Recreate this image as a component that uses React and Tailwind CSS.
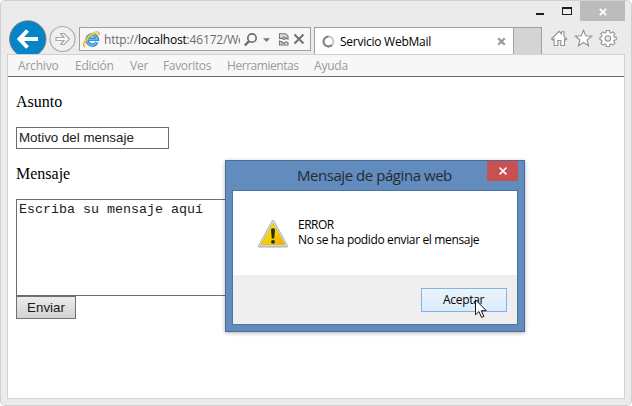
const MENU = [
  { label: "Archivo", cls: "w-[57px] tracking-[-0.2px]" },
  { label: "Edición", cls: "w-[55px] tracking-[-0.25px]" },
  { label: "Ver", cls: "w-[33px] tracking-[-0.2px]" },
  { label: "Favoritos", cls: "w-[64px] tracking-[-0.35px]" },
  { label: "Herramientas", cls: "w-[87px] tracking-[-0.45px]" },
  { label: "Ayuda", cls: "w-[40px] tracking-[-0.2px]" },
];

function WindowControls() {
  return (
    <div className="flex h-[20px] shrink-0 justify-end pr-[6px]">
      <svg className="mr-[7px] h-[20px] w-[38px]" viewBox="535 1 38 20" shapeRendering="crispEdges">
        <path d="M536 13h8v2h-8z" fill="#1c1c1c" />
        <path d="M562 7h10v8h-10zM563 9v5h8V9z" fill="#1c1c1c" fillRule="evenodd" />
      </svg>
      <div className="flex w-[45px] justify-center bg-[#bcbcbc] pt-[7px]">
        <svg className="h-[8px] w-[8px]" viewBox="0 0 8 8">
          <path d="M.8.8l6.400 6.400M7.200.8L.8 7.200" stroke="#fff" strokeWidth="1.700" />
        </svg>
      </div>
    </div>
  );
}

function AddressBar() {
  return (
    <div className="flex h-[24px] w-[232px] shrink-0 items-center border border-[#a0a0a0] bg-[#f7f7f7]">
      <svg className="ml-[3px] h-[17px] w-[17px] shrink-0" viewBox="0 0 17 17">
        <path d="M13.900 11.200a5.200 5.200 0 1 1 .5-3H5.600" fill="none" stroke="#2779bd" strokeWidth="3.400" />
        <path d="M13.700 11a5.200 5.200 0 1 1 .5-2.500H5" fill="none" stroke="#62b5ea" strokeWidth="2" />
        <path d="M2 15.600C-.8 14.300 3 7 8.300 3.500 12 .8 16.500-.2 15.600 3.800" fill="none" stroke="#dfa51b" strokeWidth="2" />
        <path d="M2 15.300C0 14 3.500 7 8.500 3.500 12 1.200 15.800.2 15.500 3" fill="none" stroke="#ffd83d" strokeWidth="1.200" />
      </svg>
      <div className="mt-[1px] ml-[4px] w-[136px] shrink-0 overflow-hidden text-[12px] leading-[18px] tracking-[-0.18px] whitespace-nowrap text-[#6d6d6d]">
        http://<span className="text-black">localhost</span>:46172/We
      </div>
      <svg className="h-[22px] w-[68px] shrink-0" viewBox="240 28 68 22">
        <circle cx="252" cy="38" r="4.200" fill="none" stroke="#6e6e6e" strokeWidth="1.700" />
        <path d="M249 41.300l-4.200 4" stroke="#6e6e6e" strokeWidth="2.400" />
        <path d="M263 38.300h7l-3.500 3.800z" fill="#777" />
        <path d="M279.500 38.500v-4.800h6l2.500 2.500v3l-2-1-2 1.500-2.500-1.500zM279.500 41l2 .8 2.500 1.500 2-1.500 2 .8v2.400h-8.500z" fill="#ddd" stroke="#757575" strokeWidth="1.100" />
        <path d="M281 38h2l1-1.500 1 1.500h2M281 43.500l1.500-1 1.500 1.500" fill="none" stroke="#777" />
        <path d="M294.500 34.500l9 9M303.500 34.500l-9 9" stroke="#747474" strokeWidth="2.100" />
      </svg>
    </div>
  );
}

function Toolbar() {
  return (
    <div className="flex h-[27px] shrink-0 pl-[7px]">
      <svg className="-mt-[7px] h-[34px] w-[40px] shrink-0" viewBox="8 20 40 34">
        <circle cx="27.800" cy="39" r="18.200" fill="#0584c7" stroke="#7d7d7d" />
        <path d="M20 39h18M27.500 30.500L19.500 39l8 8.500" fill="none" stroke="#fff" strokeWidth="4" />
      </svg>
      <svg className="-mt-[2px] mr-[3px] ml-[1px] h-[28px] w-[27px] shrink-0" viewBox="49.500 25 27 28">
        <circle cx="63" cy="39" r="12.500" fill="#f0f0f0" stroke="#ababab" strokeWidth="1.200" />
        <path d="M56.500 37.500h8l-3.300-4h3.600l5.200 5.500-5.200 5.500h-3.600l3.300-4h-8z" fill="#fafafa" stroke="#a8a8a8" strokeWidth="1.200" />
      </svg>
      <AddressBar />
      <div className="ml-[3px] flex w-[199px] shrink-0 border-t border-l border-[#a0a0a0] bg-white">
        <svg className="mt-[7px] ml-[7px] h-[13px] w-[13px]" viewBox="0 0 13 13">
          <circle cx="6.500" cy="6.500" r="4.900" fill="none" stroke="#c6c6c6" strokeWidth="2" />
          <path d="M6.500 1.600a4.900 4.900 0 1 0 3.400 8.400" fill="none" stroke="#838383" strokeWidth="2" />
        </svg>
        <span className="mt-[5px] ml-[5px] w-[144px] text-[12px] leading-[18px] tracking-[-0.25px] whitespace-nowrap text-black">
          Servicio WebMail
        </span>
        <svg className="mt-[9px] ml-[13px] h-[9px] w-[9px]" viewBox="0 0 9 9">
          <path d="M1.200 1.200l6.600 6.600M7.800 1.200L1.200 7.800" stroke="#9b9b9b" strokeWidth="2.300" />
        </svg>
      </div>
      <div className="w-[29px] shrink-0 border-x border-t border-[#a0a0a0] bg-[#d4d4d4]" />
      <svg className="ml-[8px] h-[22px] w-[70px] shrink-0" viewBox="550 27 70 22" fill="#fff" stroke="#929292" strokeWidth="1.100">
        <path d="M551.500 39l7.500-7.700 2.500 2.500v-2h2.500v4.500l2.800 2.700-1.300 1-1-1v6.500h-3.700v-5h-3v5h-3.700V39l-1.300 1z" />
        <path d="M583.500 30.300l2.200 5.500 6 .4-4.600 3.800 1.500 5.800-5.100-3.300-5.100 3.300 1.500-5.800-4.600-3.800 6-.4z" />
        <path d="M606.300 30.500h3.200l.4 2.100 1.200.5 1.800-1.200 2 2-1.200 1.800.5 1.200 2.100.4v2.400l-2.100.4-.5 1.200 1.200 1.800-2 2-1.800-1.200-1.200.5-.4 2.100h-3.200l-.4-2.100-1.200-.5-1.800 1.200-2-2 1.200-1.800-.5-1.200-1.600-.4v-2.400l1.600-.4.5-1.200-1.200-1.800 2-2 1.800 1.200 1.200-.5z" />
        <circle cx="607.900" cy="38.500" r="2.700" fill="#ebebeb" />
      </svg>
    </div>
  );
}

function MessageForm() {
  return (
    <main className="flex flex-1 flex-col items-start bg-white pt-[16px] pl-[8px] font-['Liberation_Serif',serif] text-[16px] leading-[18px] text-black">
      <p>Asunto</p>
      <div className="mt-[16px] h-[22px] w-[153px] border border-[#6d6d6d] pl-[2px] font-['Liberation_Sans',sans-serif] text-[13.33px] leading-[20px] text-[#202020]">
        Motivo del mensaje
      </div>
      <p className="mt-[16px]">Mensaje</p>
      <div className="mt-[16px] h-[97px] w-[300px] border border-[#6d6d6d] pt-[2px] pl-[2px] font-['Liberation_Mono',monospace] text-[13.33px] leading-[16px] text-[#202020]">
        Escriba su mensaje aquí
      </div>
      <div className="flex h-[23px] w-[60px] items-center justify-center border border-[#707070] bg-linear-to-b from-[#ececec] to-[#d2d2d2] font-['Liberation_Sans',sans-serif] text-[13.33px] text-[#1a1a1a]">
        Enviar
      </div>
    </main>
  );
}

function AlertDialog() {
  return (
    <div className="absolute top-[159px] left-[224px] flex h-[172px] w-[300px] flex-col border border-[#4a6d98] bg-[#628cbe] px-[6px] pb-[6px] shadow-[0_1px_4px_rgba(0,0,0,0.3)]">
      <div className="flex h-[29px] shrink-0">
        <span className="mt-[4px] ml-[65px] w-[190px] text-[15px] leading-[20px] tracking-[-0.45px] whitespace-nowrap text-[#242a33]">
          Mensaje de página web
        </span>
        <div className="flex h-[20px] w-[31px] shrink-0 items-center justify-center bg-[#c75050]">
          <svg className="h-[8px] w-[8px]" viewBox="0 0 8 8">
            <path d="M.6.6l6.800 6.800M7.400.6L.6 7.400" stroke="#fff" strokeWidth="1.600" />
          </svg>
        </div>
      </div>
      <div className="flex flex-1 flex-col border border-[#4d73a3] bg-[#efefef]">
        <div className="flex h-[84px] shrink-0 bg-white pt-[26px] pl-[24px]">
          <svg className="mt-[2px] h-[30px] w-[32px] shrink-0" viewBox="0 0 32 30">
            <defs>
              <linearGradient id="warn" x2="1" y2="1">
                <stop offset="0" stopColor="#ffe83a" />
                <stop offset=".5" stopColor="#f5d400" />
                <stop offset="1" stopColor="#eda90c" />
              </linearGradient>
            </defs>
            <path d="M16 2.500L29.500 27h-27z" fill="#bdbdbd" stroke="#b2b2b2" strokeWidth="3" strokeLinejoin="round" />
            <path d="M16 2.500L29.500 26.500h-27z" fill="#ddd" stroke="#d6d6d6" strokeWidth="1.500" strokeLinejoin="round" />
            <path d="M16 4.500L28 25.500H4z" fill="url(#warn)" stroke="#dfb611" strokeWidth=".8" strokeLinejoin="round" />
            <path d="M14 11q0-1.700 2-1.700t2 1.700l-.8 8.500h-2.400z" fill="#292918" />
            <circle cx="16" cy="22.800" r="1.900" fill="#292918" />
          </svg>
          <div className="ml-[9px] text-[12px] leading-[15px] whitespace-nowrap text-black">
            <p className="tracking-[-0.5px]">ERROR</p>
            <p className="tracking-[-0.35px]">No se ha podido enviar el mensaje</p>
          </div>
        </div>
        <div className="flex justify-end pt-[13px] pr-[10px]">
          <div className="h-[24px] w-[86px] border border-[#7eb4ea] bg-linear-to-b from-[#ebf4fc] to-[#dcebfb] pl-[21px] text-[12px] leading-[22px] tracking-[-0.3px] text-black">
            Aceptar
          </div>
        </div>
      </div>
      <svg className="absolute top-[138px] left-[249px] h-[20px] w-[13px]" viewBox="0 0 13 20">
        <path d="M.5.8v15l3.400-3.300 2.600 5.900 2.400-1-2.600-5.700h5z" fill="#fff" stroke="#111" strokeWidth="1" />
      </svg>
    </div>
  );
}

export default function App() {
  return (
    <div className="relative flex h-[406px] w-[632px] flex-col overflow-hidden rounded-[5px] border border-[#d0d0d0] bg-[#ebebeb] font-['Open_Sans','Noto_Sans',sans-serif]">
      <WindowControls />
      <div className="h-[6px] shrink-0" />
      <Toolbar />
      <div className="mr-[6px] mb-[6px] ml-[6px] flex flex-1 flex-col border border-[#d2d2d2]">
        <nav className="flex h-[22px] shrink-0 border-b border-[#6c6c6c] bg-[#f7f7f7] pl-[10px] text-[12px] leading-[21px] text-[#9a9a9a]">
          {MENU.map((m) => (
            <span key={m.label} className={`${m.cls} shrink-0 whitespace-nowrap`}>
              {m.label}
            </span>
          ))}
        </nav>
        <MessageForm />
      </div>
      <AlertDialog />
    </div>
  );
}
